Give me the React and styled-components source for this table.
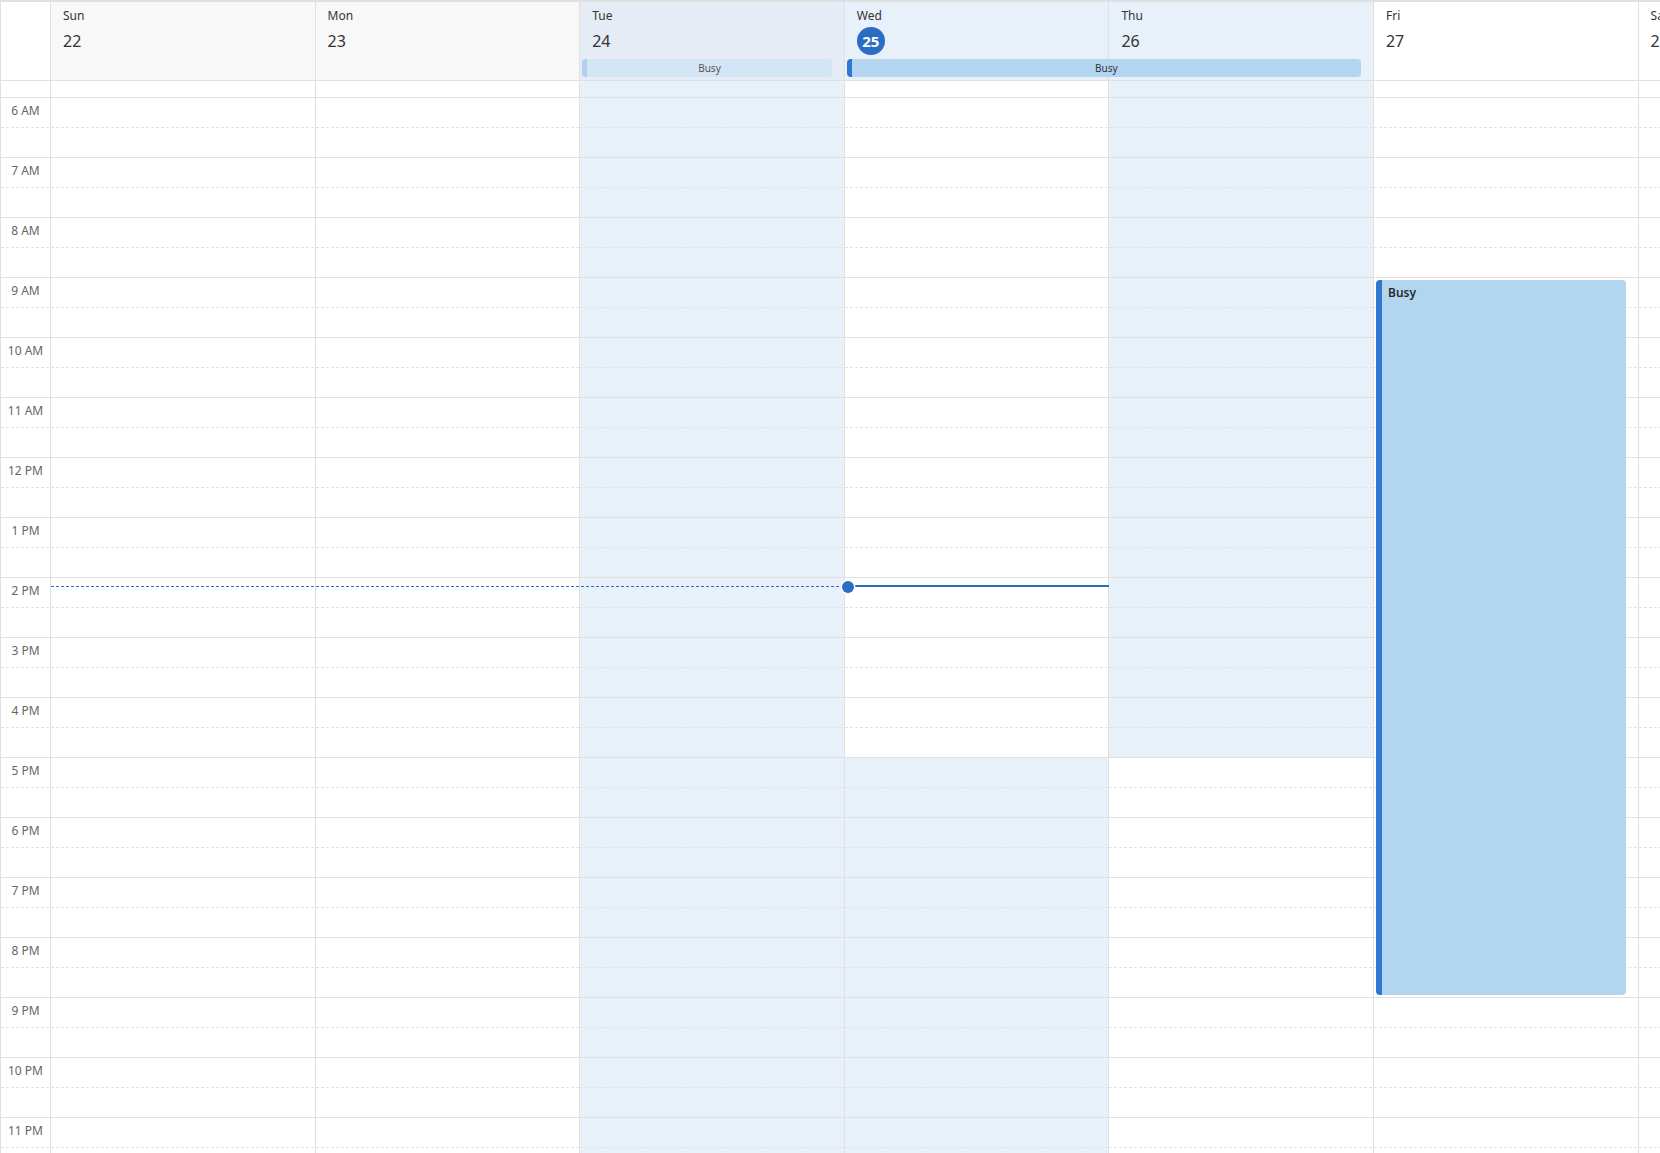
import React from 'react';
import styled, { createGlobalStyle, css } from 'styled-components';

const COL_W = 264.6;
const GUTTER_W = 50;
const HOUR_H = 60;
const SPACER_H = 16;
const FIRST_HOUR = 6;
const HOURS = Array.from({ length: 18 }, (_, i) => FIRST_HOUR + i);

const LINE = '#e0e0e0';
const DASH = '#e4e4e4';
const SHADE = '#e8f0fa';
const BLUE = '#2b6cc4';

const GlobalStyle = createGlobalStyle`
  html, body {
    margin: 0;
    padding: 0;
    overflow: hidden;
    background: #ffffff;
  }
  body {
    font-family: "Noto Sans", "Open Sans", "Liberation Sans", sans-serif;
    color: #333333;
  }
`;

const Calendar = styled.div`
  width: max-content;
  border-top: 2px solid ${LINE};
  border-left: 1px solid ${LINE};
`;

/* ---------- Header ---------- */

const HeaderGrid = styled.div`
  display: grid;
  grid-template-columns: ${GUTTER_W}px repeat(7, ${COL_W}px);
  grid-template-rows: 57px 18px 3px;
  border-bottom: 1px solid ${LINE};
`;

const GutterHead = styled.div`
  grid-column: 1;
  grid-row: 1 / -1;
  background: #ffffff;
  border-right: 1px solid ${LINE};
`;

const headerTones = {
  past: '#f8f8f8',
  pastShaded: '#e5ecf5',
  shaded: SHADE,
  plain: '#ffffff',
};

const DayHeader = styled.div`
  grid-row: 1 / -1;
  grid-column: ${(p) => p.$col};
  background: ${(p) => headerTones[p.$tone]};
  border-right: 1px solid ${LINE};
  display: flex;
  flex-direction: column;
  align-items: flex-start;
  gap: 3px;
  padding: 6px 0 0 12px;
  box-sizing: border-box;
  min-width: 0;
  overflow: hidden;
`;

const DayName = styled.div`
  font-size: 12px;
  line-height: 16px;
  color: #333333;
  white-space: nowrap;
`;

const DateNum = styled.div`
  height: 28px;
  display: flex;
  align-items: center;
  font-size: 16px;
  color: #333333;
  ${(p) =>
    p.$today &&
    css`
      width: 28px;
      justify-content: center;
      border-radius: 50%;
      background: ${BLUE};
      color: #ffffff;
      font-weight: 700;
      font-size: 15px;
    `}
`;

const AllDayEvent = styled.div`
  grid-row: 2;
  grid-column: ${(p) => p.$cols};
  z-index: 1;
  margin: 0 13px 0 2px;
  border-radius: 4px;
  border-left: 5px solid ${(p) => (p.$past ? '#afd0ef' : '#3077d0')};
  background: ${(p) => (p.$past ? '#d3e6f6' : '#b3d5f0')};
  color: ${(p) => (p.$past ? '#555555' : '#333333')};
  font-size: 10px;
  line-height: 18px;
  text-align: center;
  white-space: nowrap;
  overflow: hidden;
`;

/* ---------- Body ---------- */

const Body = styled.div`
  position: relative;
  display: grid;
  grid-template-columns: ${GUTTER_W}px repeat(7, ${COL_W}px);
`;

const Column = styled.div`
  position: relative;
  display: flex;
  flex-direction: column;
  border-right: 1px solid ${LINE};
  min-width: 0;
`;

const Spacer = styled.div`
  height: ${SPACER_H}px;
  background: ${(p) => (p.$shaded ? SHADE : '#ffffff')};
`;

const HourSlot = styled.div`
  position: relative;
  height: ${HOUR_H}px;
  box-sizing: border-box;
  border-top: 1px solid ${LINE};
  background: ${(p) => (p.$shaded ? SHADE : '#ffffff')};

  &::after {
    content: '';
    position: absolute;
    left: 0;
    right: 0;
    top: ${HOUR_H / 2 - 1}px;
    height: 1px;
    background-image: linear-gradient(to right, ${DASH} 60%, transparent 60%);
    background-size: 5px 1px;
  }
`;

const HourLabel = styled.div`
  padding-top: 5px;
  font-size: 12px;
  line-height: 16px;
  color: #666666;
  text-align: center;
  white-space: nowrap;
`;

const TimedEvent = styled.div`
  position: absolute;
  left: 2px;
  right: 12px;
  top: ${(p) => p.$top}px;
  height: ${(p) => p.$height}px;
  box-sizing: border-box;
  border-radius: 4px;
  border-left: 6px solid #3077d0;
  background: #b3d6f0;
  padding: 5px 6px;
  font-size: 12px;
  line-height: 16px;
  font-weight: 600;
  color: #2a2a2a;
  z-index: 1;
`;

/* ---------- Now indicator (overlay) ---------- */

const NOW_TOP = SPACER_H + (14 - FIRST_HOUR) * HOUR_H + 9; // 2:09 PM
const TODAY_INDEX = 3;
const TODAY_LEFT = GUTTER_W + TODAY_INDEX * COL_W;

const NowTrail = styled.div`
  position: absolute;
  z-index: 2;
  left: ${GUTTER_W}px;
  top: ${NOW_TOP}px;
  width: ${TODAY_LEFT - GUTTER_W - 3}px;
  height: 1px;
  background-image: linear-gradient(to right, ${BLUE} 60%, transparent 60%);
  background-size: 5px 1px;
`;

const NowBar = styled.div`
  position: absolute;
  z-index: 2;
  left: ${TODAY_LEFT + 3}px;
  top: ${NOW_TOP - 1}px;
  width: ${COL_W - 3}px;
  height: 2px;
  background: ${BLUE};
`;

const NowDot = styled.div`
  position: absolute;
  z-index: 3;
  left: ${TODAY_LEFT - 3}px;
  top: ${NOW_TOP - 5.5}px;
  width: 12px;
  height: 12px;
  border-radius: 50%;
  background: ${BLUE};
  box-shadow: 0 0 0 1.5px #ffffff;
`;

/* ---------- Data ---------- */

const days = [
  { name: 'Sun', num: 22, tone: 'past' },
  { name: 'Mon', num: 23, tone: 'past' },
  { name: 'Tue', num: 24, tone: 'pastShaded' },
  { name: 'Wed', num: 25, tone: 'shaded', today: true },
  { name: 'Thu', num: 26, tone: 'shaded' },
  { name: 'Fri', num: 27, tone: 'plain' },
  { name: 'Sat', num: 28, tone: 'plain' },
];

const isShaded = (dayIndex, hour) => {
  if (dayIndex === 2) return true;
  if (dayIndex === 3) return hour >= 17;
  if (dayIndex === 4) return hour < 17;
  return false;
};

const timedEvents = [{ day: 5, start: 9, end: 21, title: 'Busy' }];

const hourLabel = (h) => {
  if (h === 12) return '12 PM';
  if (h < 12) return `${h} AM`;
  return `${h - 12} PM`;
};

export default function App() {
  return (
    <>
      <GlobalStyle />
      <Calendar>
        <HeaderGrid>
          <GutterHead />
          {days.map((d, i) => (
            <DayHeader key={d.name} $col={i + 2} $tone={d.tone}>
              <DayName>{d.name}</DayName>
              <DateNum $today={d.today}>{d.num}</DateNum>
            </DayHeader>
          ))}
          <AllDayEvent $cols="4 / 5" $past>
            Busy
          </AllDayEvent>
          <AllDayEvent $cols="5 / 7">Busy</AllDayEvent>
        </HeaderGrid>

        <Body>
          <Column>
            <Spacer />
            {HOURS.map((h) => (
              <HourSlot key={h}>
                <HourLabel>{hourLabel(h)}</HourLabel>
              </HourSlot>
            ))}
          </Column>
          {days.map((d, i) => (
            <Column key={d.name}>
              <Spacer $shaded={isShaded(i, 5)} />
              {HOURS.map((h) => (
                <HourSlot key={h} $shaded={isShaded(i, h)} />
              ))}
              {timedEvents
                .filter((e) => e.day === i)
                .map((e) => (
                  <TimedEvent
                    key={e.start}
                    $top={SPACER_H + (e.start - FIRST_HOUR) * HOUR_H + 3}
                    $height={(e.end - e.start) * HOUR_H - 5}
                  >
                    {e.title}
                  </TimedEvent>
                ))}
            </Column>
          ))}
          <NowTrail />
          <NowBar />
          <NowDot />
        </Body>
      </Calendar>
    </>
  );
}
